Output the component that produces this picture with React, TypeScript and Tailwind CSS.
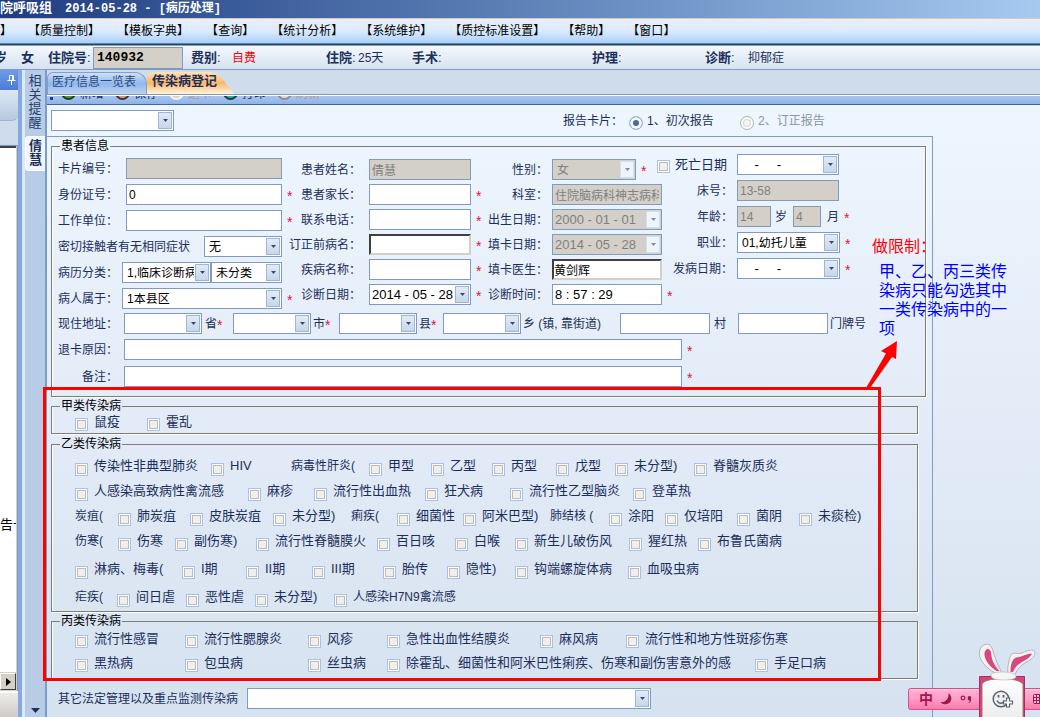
import React from 'react';

const MENUS = ['质量控制', '模板字典', '查询', '统计分析', '系统维护', '质控标准设置', '帮助', '窗口'];

interface Item {
  label: string;
  w: string;
  // plain text in front of a group, without a tick box
  text?: boolean;
  tight?: boolean;
}

const CLASS_A: Item[] = [
  { label: '鼠疫', w: 'w-[72px]' },
  { label: '霍乱', w: 'w-[72px]' },
];

const CLASS_B: Item[][] = [
  [
    { label: '传染性非典型肺炎', w: 'w-[136px]' },
    { label: 'HIV', w: 'w-[80px]' },
    { label: '病毒性肝炎(', w: 'w-[78px]', text: true },
    { label: '甲型', w: 'w-[62px]' },
    { label: '乙型', w: 'w-[61px]' },
    { label: '丙型', w: 'w-[64px]' },
    { label: '戊型', w: 'w-[59px]' },
    { label: '未分型)', w: 'w-[79px]' },
    { label: '脊髓灰质炎', w: 'w-[90px]' },
  ],
  [
    { label: '人感染高致病性禽流感', w: 'w-[173px]' },
    { label: '麻疹', w: 'w-[66px]' },
    { label: '流行性出血热', w: 'w-[111px]' },
    { label: '狂犬病', w: 'w-[85px]' },
    { label: '流行性乙型脑炎', w: 'w-[123px]' },
    { label: '登革热', w: 'w-[66px]' },
  ],
  [
    { label: '炭疽(', w: 'w-[43px]', text: true },
    { label: '肺炭疽', w: 'w-[72px]' },
    { label: '皮肤炭疽', w: 'w-[83px]' },
    { label: '未分型)', w: 'w-[78px]' },
    { label: '痢疾(', w: 'w-[46px]', text: true },
    { label: '细菌性', w: 'w-[66px]' },
    { label: '阿米巴型)', w: 'w-[87px]' },
    { label: '肺结核 (', w: 'w-[59px]', text: true },
    { label: '涂阳', w: 'w-[56px]' },
    { label: '仅培阳', w: 'w-[72px]' },
    { label: '菌阴', w: 'w-[62px]' },
    { label: '未痰检)', w: 'w-[66px]' },
  ],
  [
    { label: '伤寒(', w: 'w-[43px]', text: true },
    { label: '伤寒', w: 'w-[57px]' },
    { label: '副伤寒)', w: 'w-[81px]' },
    { label: '流行性脊髓膜火', w: 'w-[121px]' },
    { label: '百日咳', w: 'w-[78px]' },
    { label: '白喉', w: 'w-[60px]' },
    { label: '新生儿破伤风', w: 'w-[114px]' },
    { label: '猩红热', w: 'w-[69px]' },
    { label: '布鲁氏菌病', w: 'w-[90px]' },
  ],
  [
    { label: '淋病、梅毒(', w: 'w-[107px]' },
    { label: 'I期', w: 'w-[64px]' },
    { label: 'II期', w: 'w-[66px]' },
    { label: 'III期', w: 'w-[71px]' },
    { label: '胎传', w: 'w-[64px]' },
    { label: '隐性)', w: 'w-[68px]' },
    { label: '钩端螺旋体病', w: 'w-[113px]' },
    { label: '血吸虫病', w: 'w-[80px]' },
  ],
  [
    { label: '疟疾(', w: 'w-[42px]', text: true },
    { label: '间日虐', w: 'w-[69px]' },
    { label: '恶性虐', w: 'w-[69px]' },
    { label: '未分型)', w: 'w-[79px]' },
    { label: '人感染H7N9禽流感', w: 'w-[130px]', tight: true },
  ],
];

const CLASS_C: Item[][] = [
  [
    { label: '流行性感冒', w: 'w-[110px]' },
    { label: '流行性腮腺炎', w: 'w-[123px]' },
    { label: '风疹', w: 'w-[79px]' },
    { label: '急性出血性结膜炎', w: 'w-[153px]' },
    { label: '麻风病', w: 'w-[86px]' },
    { label: '流行性和地方性斑疹伤寒', w: 'w-[170px]' },
  ],
  [
    { label: '黑热病', w: 'w-[110px]' },
    { label: '包虫病', w: 'w-[123px]' },
    { label: '丝虫病', w: 'w-[79px]' },
    { label: '除霍乱、细菌性和阿米巴性痢疾、伤寒和副伤害意外的感', w: 'w-[368px]' },
    { label: '手足口病', w: 'w-[80px]' },
  ],
];

const TOOLS = [
  { name: '新增', dot: 'bg-[#4f9a3c] border-[#1f3d1a]', text: 'text-[#1c2f5c]' },
  { name: '保存', dot: 'bg-[#c9a58c] border-[#4a2f28]', text: 'text-[#1c2f5c]' },
  { name: '退卡', dot: 'bg-[#d8d4cc] border-[#f6f4f0]', text: 'text-[#a89a90]' },
  { name: '打印', dot: 'bg-[#27b3b8] border-[#1d3a3c]', text: 'text-[#1c2f5c]' },
  { name: '刷新', dot: 'bg-[#dcdcdc] border-[#8d8d8d]', text: 'text-[#b8977a]' },
];

const FIELD = 'h-[21px] shrink-0 border border-[#7f9bc4] bg-white leading-none text-black outline-none';
const FIELD_OFF = 'h-[21px] shrink-0 border border-[#7f9bc4] bg-[#d4d0c8] leading-none text-[#808080] outline-none';
const FIELD_SUNK = 'h-[21px] shrink-0 border-2 border-t-[#404040] border-l-[#404040] border-r-[#d4d0c8] border-b-[#d4d0c8] bg-white text-xs leading-none text-black outline-none';

const Star = () => <span className="ml-[5px] pt-0.5 text-sm leading-none text-[#dc143c]">*</span>;

const Caption = ({ w, children }: { w: string; children: React.ReactNode }) => (
  <span className={`${w} flex shrink-0 justify-end whitespace-nowrap`}>{children}</span>
);

const Arrow = ({ off }: { off?: boolean }) => (
  <span
    className={`pointer-events-none absolute inset-y-0.5 right-0.5 flex w-[14px] items-center justify-center border ${
      off ? 'border-[#cfe0f4] bg-[#eef4fb]' : 'border-[#9fb5d8] bg-gradient-to-b from-[#e2ebf8] to-[#c6d6ec]'
    }`}
  >
    <svg width="5" height="3" viewBox="0 0 5 3">
      <path d="M0 0h5L2.5 3z" fill={off ? '#8a8a8a' : '#3f4a60'} />
    </svg>
  </span>
);

interface PickProps {
  w: string;
  value?: string;
  name?: string;
  off?: boolean;
}

const Pick = ({ w, value = '', name, off }: PickProps) => (
  <span className={`${w} relative flex shrink-0`}>
    <select aria-label={name} disabled={off} defaultValue={value} className={`${off ? FIELD_OFF : FIELD} w-full appearance-none pr-4 pl-1 text-xs opacity-100`}>
      <option value={value}>{value}</option>
    </select>
    <Arrow off={off} />
  </span>
);

const DateBox = ({ w, value = '', name, off }: PickProps) => (
  <span className={`${w} relative flex shrink-0`}>
    <input aria-label={name} disabled={off} defaultValue={value} className={`${off ? FIELD_OFF : FIELD} w-full px-0.5 text-[13px] whitespace-pre`} />
    <Arrow off={off} />
  </span>
);

const Line = ({ children }: { children: React.ReactNode }) => (
  <label className="flex h-[21px] items-center">{children}</label>
);

const Box = ({ disabled }: { disabled?: boolean }) => (
  <input
    type="checkbox"
    disabled={disabled}
    className="mt-[3px] h-[13px] w-[13px] shrink-0 appearance-none border border-[#a9c1e6] bg-[#f0efee] shadow-[inset_0_0_0_1px_#fff,inset_0_0_0_2px_#bcbcbc] checked:bg-[#4a6a9c]"
  />
);

const CheckRow = ({ items, className = 'h-[25px]' }: { items: Item[]; className?: string }) => (
  <div className={`${className} flex items-center pl-[23px]`}>
    {items.map((item, i) =>
      item.text ? (
        <span key={i} className={`${item.w} mb-[3px] shrink-0 whitespace-nowrap`}>{item.label}</span>
      ) : (
        <label key={i} className={`${item.w} flex shrink-0 items-center gap-1.5 whitespace-nowrap`}>
          <Box />
          <span className={`mb-[3px] ${item.tight ? 'text-xs' : 'text-[13px]'}`}>{item.label}</span>
        </label>
      )
    )}
  </div>
);

const Group = ({ title, className = '', children }: { title: string; className?: string; children: React.ReactNode }) => (
  <fieldset className={`${className} min-w-0 border border-[#7d7d78] shadow-[1px_1px_0_#fff,inset_1px_0_0_#fff]`}>
    <legend className="ml-2 px-px text-xs leading-[14px] text-black">{title}</legend>
    {children}
  </fieldset>
);

const PatientInfo = () => (
  <Group title="患者信息">
    <div className="flex items-start">
      <div className="flex w-[244px] shrink-0 flex-col gap-[5px] pt-[5px]">
        <Line>
          <Caption w="w-[66px] mr-2">卡片编号：</Caption>
          <input disabled className={`${FIELD_OFF} w-[156px]`} />
        </Line>
        <Line>
          <Caption w="w-[66px] mr-2">身份证号：</Caption>
          <input defaultValue="0" className={`${FIELD} w-[156px] px-0.5 text-xs`} />
          <Star />
        </Line>
        <Line>
          <Caption w="w-[66px] mr-2">工作单位：</Caption>
          <input className={`${FIELD} w-[156px] px-0.5 text-xs`} />
          <Star />
        </Line>
        <Line>
          <Caption w="w-[138px] mr-[14px]">密切接触者有无相同症状</Caption>
          <Pick w="w-[78px]" value="无" />
        </Line>
        <div className="flex h-[21px] items-center">
          <Caption w="w-[66px] mr-1">病历分类：</Caption>
          <Pick w="w-[89px]" value="1,临床诊断病例" name="病历分类" />
          <Pick w="w-[71px]" value="未分类" name="病历子类" />
        </div>
        <Line>
          <Caption w="w-[66px] mr-1">病人属于：</Caption>
          <Pick w="w-[160px]" value="1本县区" />
          <Star />
        </Line>
      </div>

      <div className="flex w-[188px] shrink-0 flex-col gap-1 pt-1.5">
        <Line>
          <Caption w="w-[65px] mr-2">患者姓名：</Caption>
          <input disabled defaultValue="倩慧" className={`${FIELD_OFF} w-[102px] px-0.5 text-xs`} />
        </Line>
        <Line>
          <Caption w="w-[65px] mr-2">患者家长：</Caption>
          <input className={`${FIELD} w-[102px] px-0.5 text-xs`} />
          <Star />
        </Line>
        <Line>
          <Caption w="w-[65px] mr-2">联系电话：</Caption>
          <input className={`${FIELD} w-[102px] px-0.5 text-xs`} />
          <Star />
        </Line>
        <Line>
          <Caption w="w-[65px] mr-2">订正前病名：</Caption>
          <input className={`${FIELD_SUNK} w-[102px]`} />
          <Star />
        </Line>
        <Line>
          <Caption w="w-[65px] mr-2">疾病名称：</Caption>
          <input className={`${FIELD} w-[102px] px-0.5 text-xs`} />
          <Star />
        </Line>
        <Line>
          <Caption w="w-[65px] mr-2">诊断日期：</Caption>
          <DateBox w="w-[102px]" value="2014 - 05 - 28" />
          <Star />
        </Line>
      </div>

      <div className="flex w-[185px] shrink-0 flex-col gap-1 pt-1.5">
        <Line>
          <Caption w="w-[64px] mr-1">性别：</Caption>
          <Pick w="w-[84px]" value="女" off />
          <Star />
        </Line>
        <Line>
          <Caption w="w-[64px] mr-1">科室：</Caption>
          <input disabled defaultValue="住院脑病科神志病科" className={`${FIELD_OFF} w-[110px] px-0.5 text-xs`} />
        </Line>
        <Line>
          <Caption w="w-[64px] mr-1">出生日期：</Caption>
          <DateBox w="w-[110px]" value="2000 - 01 - 01" off />
        </Line>
        <Line>
          <Caption w="w-[64px] mr-1">填卡日期：</Caption>
          <DateBox w="w-[110px]" value="2014 - 05 - 28" off />
        </Line>
        <Line>
          <Caption w="w-[64px] mr-1">填卡医生：</Caption>
          <input defaultValue="黄剑辉" className={`${FIELD_SUNK} w-[110px]`} />
        </Line>
        <Line>
          <Caption w="w-[64px] mr-1">诊断时间：</Caption>
          <input defaultValue="8 : 57 : 29" className={`${FIELD} w-[110px] px-0.5 text-[13px]`} />
          <Star />
        </Line>
      </div>

      <div className="flex shrink-0 flex-col gap-[5px] pt-px">
        <div className="flex h-[21px] items-center">
          <Caption w="w-[58px] mr-[10px]">
            <label className="flex items-center gap-[5px] text-[13px]">
              <Box disabled />
              死亡日期
            </label>
          </Caption>
          <DateBox w="w-[102px]" value="    -     -" name="死亡日期" />
        </div>
        <Line>
          <Caption w="w-[64px] mr-1">床号：</Caption>
          <input disabled defaultValue="13-58" className={`${FIELD_OFF} w-[102px] px-0.5 text-xs`} />
        </Line>
        <div className="flex h-[21px] items-center">
          <Caption w="w-[64px] mr-1">年龄：</Caption>
          <input disabled aria-label="年龄（岁）" defaultValue="14" className={`${FIELD_OFF} w-[34px] px-0.5 text-xs`} />
          <span className="mr-1.5 ml-1">岁</span>
          <input disabled aria-label="年龄（月）" defaultValue="4" className={`${FIELD_OFF} w-[28px] px-0.5 text-xs`} />
          <span className="ml-1.5">月</span>
          <Star />
        </div>
        <Line>
          <Caption w="w-[64px] mr-1">职业：</Caption>
          <Pick w="w-[103px]" value="01,幼托儿童" />
          <Star />
        </Line>
        <Line>
          <Caption w="w-[64px] mr-1">发病日期：</Caption>
          <DateBox w="w-[103px]" value="    -     -" />
          <Star />
        </Line>
      </div>
    </div>

    <div className="mt-1 flex h-[21px] items-center whitespace-nowrap">
      <Caption w="w-[66px] mr-1.5">现住地址：</Caption>
      <Pick w="w-[78px]" name="省" />
      <span className="flex w-[31px] shrink-0 pl-[3px]">省<span className="pt-0.5 text-sm leading-none text-[#dc143c]">*</span></span>
      <Pick w="w-[78px]" name="市" />
      <span className="flex w-[28px] shrink-0 pl-0.5">市<span className="pt-0.5 text-sm leading-none text-[#dc143c]">*</span></span>
      <Pick w="w-[78px]" name="县" />
      <span className="flex w-[26px] shrink-0 pl-0.5">县<span className="pt-0.5 text-sm leading-none text-[#dc143c]">*</span></span>
      <Pick w="w-[78px]" name="乡" />
      <span className="w-[99px] shrink-0 pl-0.5">乡 (镇, 靠街道)</span>
      <input aria-label="村" className={`${FIELD} w-[90px] px-0.5 text-xs`} />
      <span className="w-[28px] shrink-0 pl-1">村</span>
      <input aria-label="门牌号" className={`${FIELD} w-[90px] px-0.5 text-xs`} />
      <span className="pl-0.5">门牌号</span>
    </div>
    <div className="mt-[5px] flex flex-col gap-1.5 pb-[9px]">
      <Line>
        <Caption w="w-[66px] mr-1.5">退卡原因：</Caption>
        <input className={`${FIELD} w-[558px] px-0.5 text-xs`} />
        <Star />
      </Line>
      <Line>
        <Caption w="w-[66px] mr-1.5">备注：</Caption>
        <input className={`${FIELD} w-[558px] px-0.5 text-xs`} />
        <Star />
      </Line>
    </div>
  </Group>
);

const LeftDock = () => (
  <div className="flex shrink-0">
    <div className="flex w-[18px] flex-col overflow-hidden bg-[#cfdcee]">
      <div className="flex h-5 items-center bg-gradient-to-b from-[#6e9be8] to-[#4b7bd6] pl-[7px]">
        <svg width="9" height="10" viewBox="0 0 9 10" fill="none" stroke="#fff">
          <path d="M2.500 0.500h4v5M2.500 0.500v5M5.500 0.500v5M0.500 5.500h8M4.500 6v4" />
        </svg>
      </div>
      <div className="h-[31px] rounded-br-md border-b border-[#9db4d2] bg-gradient-to-b from-[#dde8f5] to-[#b7c9de]" />
      <div className="h-[24px]" />
      <div className="flex flex-1 flex-col border-t border-r border-[#7f9bc4] bg-[#d4d0c8] pr-px">
        <div className="flex-1 overflow-hidden border-t-2 border-[#404040] bg-white pt-[369px] text-[13px] leading-4 whitespace-nowrap text-black">
          告卡
        </div>
        <button aria-label="向右滚动" className="my-px flex h-[17px] items-center justify-center border border-t-white border-r-[#404040] border-b-[#404040] border-l-white bg-[#d4d0c8]">
          <svg width="5" height="8" viewBox="0 0 5 8"><path d="M0 0l5 4-5 4z" fill="#000" /></svg>
        </button>
      </div>
      <div className="h-[26px] border-t-2 border-white bg-gradient-to-b from-[#eeece8] to-[#cfccc6]" />
    </div>
    <div className="w-1 bg-[#86a9e4]" />
    <div className="w-[3px] bg-[#dde9f7]" />
    <div className="flex w-[20px] flex-col items-center bg-[#b9cce5]">
      <button className="flex h-[66px] w-full justify-center pt-1 text-[13px] leading-[14px] text-[#24406f]">
        <span className="w-[13px]">相关提醒</span>
      </button>
      <button className="flex h-[35px] w-full justify-center rounded-l border border-r-0 border-white bg-[#f1f6fc] pt-0.5 text-[13px] leading-[14px] font-bold">
        <span className="w-[13px]">倩慧</span>
      </button>
      <div className="mt-auto pb-1">
        <svg width="9" height="5" viewBox="0 0 9 5"><path d="M0 0h9L4.500 5z" fill="#1c2f5c" /></svg>
      </div>
    </div>
    <div className="w-0.5 bg-[#7c9bcb]" />
  </div>
);

const ImeBar = () => (
  <div className="absolute right-0 bottom-0 z-20">
    <svg width="134" height="74" viewBox="906 643 134 74" className="block" role="img" aria-label="输入法">
      <defs>
        <linearGradient id="pink" x1="0" y1="0" x2="0" y2="1">
          <stop offset="0" stopColor="#ffb3d3" />
          <stop offset="0.5" stopColor="#ff9cc6" />
          <stop offset="1" stopColor="#f678ab" />
        </linearGradient>
        <linearGradient id="card" x1="0" y1="0" x2="0" y2="1">
          <stop offset="0" stopColor="#ffffff" />
          <stop offset="1" stopColor="#ececec" />
        </linearGradient>
      </defs>
      <rect x="908.500" y="688.500" width="140" height="21" rx="2" fill="url(#pink)" stroke="#d94f88" />
      <path d="M910 689.800h130" stroke="#ffd5e7" />
      <text x="919" y="704" fontSize="14" fontWeight="bold" fill="#a3154f" fontFamily="'Noto Sans CJK SC', sans-serif">中</text>
      <path d="M948 692.500c5 2.500 5.500 10-1 12-3 1-6-.5-7.500-3 6 1.500 9.500-3.500 8.500-9z" fill="#a3154f" stroke="#ffd0e4" strokeWidth="0.600" />
      <circle cx="963" cy="698" r="1.900" fill="none" stroke="#a3154f" strokeWidth="1.200" />
      <path d="M967.800 696.300h3.300v3.200c0 2-1 3.200-2.800 3.700 1-1 1.300-1.800 1.200-3h-1.700z" fill="#a3154f" />
      <g stroke="#a3154f" fill="none">
        <rect x="1033.500" y="694.500" width="10" height="9" rx="1" fill="#fbd" />
        <path d="M1033 697.500h8M1033 700.500h8M1036.500 695v9M1039.500 695v9" />
      </g>
      <path d="M979.500 720v-43.500h45V720" fill="#d9447c" stroke="#a32f62" />
      <path d="M982 720v-36c3-4 9-5 20-5s17 1 21 5v36z" fill="url(#card)" stroke="#8d6b4f" strokeWidth="0.800" />
      <path d="M998 675C986 668 978 660 979.500 651C981 645 986 643 990 645C993.500 648 993 657 1002 673z" fill="#f4f2f3" stroke="#aaa3a7" strokeWidth="0.800" />
      <path d="M996.500 671C989 666 984 659 984.500 653C985.500 648 989.500 648 991 652C991.500 660 994 665 999.500 671z" fill="#d8487f" />
      <path d="M1008 674C1007 666 1009.500 657 1011.500 654C1014 652 1018 654.500 1022 653C1028 650 1034 648.500 1035 652.500C1034.500 658 1030 660 1025 663C1020 666 1017 669 1015 675z" fill="#f4f2f3" stroke="#aaa3a7" strokeWidth="0.800" />
      <path d="M1010.500 672C1010.500 664 1012.500 659 1016 657.500C1022 657 1027 653.500 1032 653.500C1029.500 659 1023 661 1019 664C1015.500 666.500 1014.500 669 1013 672z" fill="#d8487f" />
      <path d="M991 676c-1-3 4-4 12-4s14 2 13 5c-1 2-5 3-12 3s-12-1-13-4z" fill="#f5f5f5" stroke="#bdb8ba" strokeWidth="0.700" />
      <g fill="none" stroke="#59636e" strokeWidth="1.500">
        <circle cx="1001" cy="699" r="7.800" fill="#eef1f3" />
        <path d="M997 700.500c1.500 3.500 6 3.500 7.500 0" />
        <path d="M998.500 695v2.500M1003.500 695v2.500" strokeWidth="1.800" />
      </g>
      <path d="M1006.500 698h3v3h3v3h-3v3h-3v-3h-3v-3h3z" fill="#fff" stroke="#59636e" strokeWidth="1.200" />
    </svg>
  </div>
);

export default function App() {
  return (
    <div className="relative flex min-h-screen w-full flex-col overflow-hidden bg-[#cfdcee] font-['Liberation_Sans','Noto_Sans_CJK_SC',sans-serif] text-xs leading-4 text-[#1c2f5c]">
      {/* 标题栏 */}
      <header className="flex h-[18px] shrink-0 items-center gap-[13px] overflow-hidden bg-gradient-to-r from-[#1f3c80] to-[#a6caf0] font-['Liberation_Mono','Noto_Sans_CJK_SC',monospace] font-bold whitespace-nowrap text-white">
        <span className="text-[13px]">院呼吸组</span>
        <span className="whitespace-pre">2014-05-28 - [病历处理]</span>
      </header>

      <nav className="flex h-[25px] shrink-0 items-center gap-[17px] overflow-hidden border-t border-[#d8c8b4] bg-gradient-to-b from-[#e9effb] via-[#dcebfd] to-[#a9d0fb] whitespace-nowrap text-black">
        <span className="-mr-px">】</span>
        {MENUS.map((menu) => (
          <button key={menu}>【{menu}】</button>
        ))}
      </nav>
      <div className="h-[3px] shrink-0 border-t border-b border-t-[#5a86b4] border-b-[#7fa3c4] bg-[#3c3c3c]" />

      {/* 病人概要 */}
      <div className="flex h-[24px] shrink-0 items-center overflow-hidden border-b border-[#7f9bc4] bg-gradient-to-b from-[#f3f8fd] to-[#d7e3f0] text-[13px] whitespace-nowrap">
        <b className="-ml-1.5 w-[27px] shrink-0">岁</b>
        <b className="w-[27px] shrink-0">女</b>
        <label className="flex w-[143px] shrink-0 items-center">
          <b className="w-[45px]">住院号<span className="font-normal">:</span></b>
          <input
            defaultValue="140932"
            className="h-[22px] w-[90px] border border-[#7f9bc4] bg-[#d4d0c8] px-[3px] font-['Liberation_Mono',monospace] text-[13px] font-bold text-black outline-none"
          />
        </label>
        <b className="w-[41px] shrink-0">费别<span className="font-normal">:</span></b>
        <span className="w-[94px] shrink-0 text-xs text-[#ff0000]">自费</span>
        <b className="w-[32px] shrink-0">住院<span className="font-normal">:</span></b>
        <span className="w-[54px] shrink-0 text-xs">25天</span>
        <b className="w-[180px] shrink-0">手术<span className="font-normal">:</span></b>
        <b className="w-[113px] shrink-0">护理<span className="font-normal">:</span></b>
        <b className="w-[43px] shrink-0">诊断<span className="font-normal">:</span></b>
        <span className="text-xs">抑郁症</span>
      </div>

      <div className="flex flex-1">
        <LeftDock />

        <main className="flex min-w-0 flex-1 flex-col bg-gradient-to-b from-[#eff7ff] via-[#e4ecf8] to-[#d6e2f0]">
          <div className="flex h-[25px] shrink-0 items-end border-b border-[#7f9bc4] bg-[#cfdcec]">
            <button className="h-[22px] w-[100px] shrink-0 rounded-tl-md rounded-tr-xl border border-b-0 border-[#7f9fd0] bg-gradient-to-b from-[#cfe0f8] via-[#93b7ea] to-[#b9d3f5] pb-1 pl-1 text-left text-[#2c4a80]">
              医疗信息一览表
            </button>
            <button className="h-[22px] w-[87px] shrink-0 rounded-tl-md bg-gradient-to-b from-[#fde2b8] via-[#fbb765] to-[#fff3e0] pb-1 pl-[5px] text-left text-[13px] font-bold [clip-path:polygon(0_0,76%_0,84%_18%,100%_100%,0_100%)]">
              传染病登记
            </button>
          </div>

          {/* 工具条只露出底边 */}
          <div className="flex h-[10px] shrink-0 items-end overflow-hidden border-t border-b border-t-white border-b-[#3c64a8] bg-gradient-to-b from-[#a9c5ee] to-[#8fb3e6] pb-1 pl-[3px]">
            <span className="mr-2 h-[3px] w-[3px] shrink-0 bg-[#1c3f7c]" />
            {TOOLS.map((tool) => (
              <button key={tool.name} className={`${tool.text} flex w-[54px] shrink-0 items-end gap-1 leading-3`}>
                <span className={`${tool.dot} h-[15px] w-[15px] rounded-full border-2`} />
                {tool.name}
              </button>
            ))}
          </div>

          <div className="flex h-[31px] shrink-0 items-center pl-1 whitespace-nowrap">
            <Pick w="w-[123px]" name="卡片" />
            <span className="ml-[389px]">报告卡片：</span>
            <label className="ml-1.5 flex w-[111px] items-center gap-1">
              <input
                type="radio"
                name="report"
                defaultChecked
                className="mt-1 h-[14px] w-[14px] appearance-none rounded-full border border-[#a9bddb] bg-[#4a6a9c] shadow-[inset_0_0_0_3px_#f4f8fd]"
              />
              <span>1、初次报告</span>
            </label>
            <label className="flex items-center gap-1 text-[#8b95a3]">
              <input
                type="radio"
                name="report"
                disabled
                className="mt-1 h-[14px] w-[14px] appearance-none rounded-full border border-[#b4b4b4] bg-[#f4f4f4] shadow-[inset_0_0_0_2px_#fff,inset_0_0_0_3px_#d8d8d8]"
              />
              <span>2、订正报告</span>
            </label>
          </div>

          <div className="mr-[107px] flex-1 border-t border-r border-[#7f9bc4] pt-0.5 pb-2 pl-1">
            <div className="relative mr-1.5">
              <PatientInfo />
              <p className="absolute top-[98px] left-[821px] z-10 text-base leading-[19px] whitespace-nowrap text-[#ff0000]">做限制：</p>
              <p className="absolute top-[123px] left-[828px] z-10 w-[128px] text-base leading-[19px] text-[#0000ff]">
                甲、乙、丙三类传染病只能勾选其中一类传染病中的一项
              </p>
              <svg className="absolute top-[202px] left-[815px] z-10" width="32" height="48" viewBox="0 0 32 48">
                <path d="M31 0L15 10l5 2.500L0 47h4L26 16l4 2z" fill="#ff0000" />
              </svg>
            </div>

            <div className="relative mt-0.5 mr-[14px]">
              <Group title="甲类传染病">
                <CheckRow items={CLASS_A} className="h-[20px]" />
              </Group>
              <Group title="乙类传染病" className="mt-[3px]">
                <div className="pt-1">
                  {CLASS_B.map((row, i) => (
                    <CheckRow key={i} items={row} className={i > 3 ? 'h-[25px] mt-[3px]' : 'h-[25px]'} />
                  ))}
                </div>
              </Group>
              <Group title="丙类传染病" className="mt-0.5">
                <div className="pb-0.5">
                  {CLASS_C.map((row, i) => (
                    <CheckRow key={i} items={row} className="h-6" />
                  ))}
                </div>
              </Group>
              <div className="pointer-events-none absolute -top-3 right-[37px] -bottom-0.5 -left-2 z-10 border-[3px] border-[#ff0000]" />
            </div>

            <label className="mt-[9px] flex h-[21px] items-center pl-[7px] whitespace-nowrap">
              <span className="w-[189px] shrink-0">其它法定管理以及重点监测传染病</span>
              <Pick w="w-[404px]" />
            </label>
          </div>
        </main>
      </div>

      <ImeBar />
    </div>
  );
}
